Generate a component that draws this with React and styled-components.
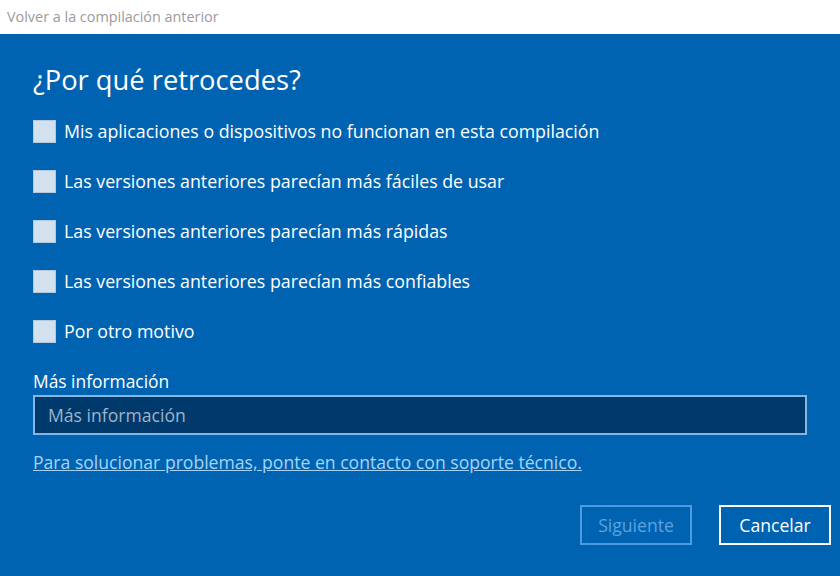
import styled, { createGlobalStyle } from 'styled-components'

const Global = createGlobalStyle`
  html, body { margin: 0; padding: 0; }
  body {
    width: 840px;
    height: 576px;
    overflow: hidden;
    font-family: "Open Sans", "Noto Sans", sans-serif;
  }
`

const options = [
  'Mis aplicaciones o dispositivos no funcionan en esta compilación',
  'Las versiones anteriores parecían más fáciles de usar',
  'Las versiones anteriores parecían más rápidas',
  'Las versiones anteriores parecían más confiables',
  'Por otro motivo',
]

export default function App() {
  return (
    <Window>
      <Global />
      <TitleBar>Volver a la compilación anterior</TitleBar>
      <Body>
        <Heading>¿Por qué retrocedes?</Heading>
        <Options>
          {options.map((o) => (
            <Option key={o}>
              <Box />
              <span>{o}</span>
            </Option>
          ))}
        </Options>
        <Label>Más información</Label>
        <Input placeholder="Más información" />
        <Link href="#">Para solucionar problemas, ponte en contacto con soporte técnico.</Link>
        <Footer>
          <Button disabled>Siguiente</Button>
          <Button>Cancelar</Button>
        </Footer>
      </Body>
    </Window>
  )
}

const Window = styled.div`
  width: 840px;
  height: 576px;
  display: flex;
  flex-direction: column;
  background: #0063b1;
`

const TitleBar = styled.div`
  height: 34px;
  flex-shrink: 0;
  background: #fff;
  color: #9b9b9b;
  font-size: 14.4px;
  padding-left: 7px;
  line-height: 33px;
`

const Body = styled.div`
  flex: 1;
  padding: 0 33px 0 33px;
  display: flex;
  flex-direction: column;
  color: #fff;
`

const Heading = styled.h1`
  margin: 26px 0 0;
  font-weight: 400;
  font-size: 27.3px;
  line-height: 40px;
`

const Options = styled.div`
  margin-top: 6px;
  display: flex;
  flex-direction: column;
`

const Option = styled.label`
  height: 50px;
  display: flex;
  align-items: center;
  gap: 8px;
  font-size: 17.8px;
`

const Box = styled.span`
  width: 23px;
  height: 23px;
  box-sizing: border-box;
  background: #d3e0ed;
  border: 1px solid #b3c9de;
  flex-shrink: 0;
`

const Label = styled.div`
  margin-top: 13px;
  font-size: 17.4px;
  line-height: 24px;
`

const Input = styled.input`
  margin-top: 2px;
  width: 774px;
  height: 40px;
  box-sizing: border-box;
  background: #003a6c;
  border: 2px solid #86b6e0;
  color: #fff;
  font-family: inherit;
  font-size: 17.6px;
  padding: 0 13px;
  outline: none;
  &::placeholder { color: #9db3c9; }
`

const Link = styled.a`
  margin-top: 15px;
  color: #a6d3f5;
  font-size: 17.6px;
  line-height: 24px;
  align-self: flex-start;
`

const Footer = styled.div`
  margin-top: 31px;
  display: flex;
  justify-content: flex-end;
  gap: 27px;
  margin-right: -24px;
`

const Button = styled.button`
  width: 112px;
  height: 40px;
  box-sizing: border-box;
  background: transparent;
  font-family: inherit;
  font-size: 17.6px;
  color: #fff;
  border: 2px solid #fff;
  &:disabled {
    color: #5aa3e0;
    border-color: #4f9be0;
  }
`
